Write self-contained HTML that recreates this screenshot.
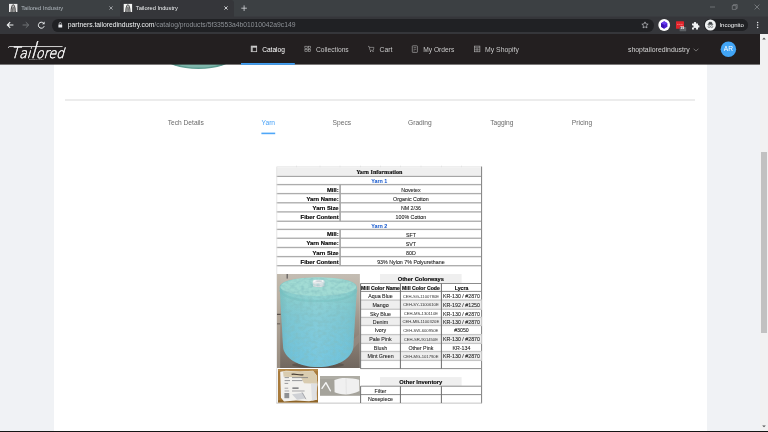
<!DOCTYPE html>
<html lang="en">
<head>
<meta charset="utf-8">
<title>Tailored Industry</title>
<style>
html,body{margin:0;padding:0;}
body{width:768px;height:432px;overflow:hidden;position:relative;background:#f0f2f5;font-family:"Liberation Sans",sans-serif;}
.a{position:absolute;}
.t{position:absolute;white-space:nowrap;line-height:1;}
/* ---------- browser chrome ---------- */
#tabbar{left:0;top:0;width:768px;height:17px;background:linear-gradient(#3c4043 0,#3c4043 16px,#393b3f 16px,#393b3f 17px);}
#tab2{left:119.5px;top:0;width:114.5px;height:17px;background:#35363a;border-radius:3px 3px 0 0;}
#toolbar{left:0;top:16.5px;width:768px;height:17.5px;background:#35363a;}
#omni{left:52px;top:19px;width:601.6px;height:13px;border-radius:6.4px;background:#202124;}
#incog{left:704px;top:19.4px;width:44px;height:11.2px;border-radius:5.6px;background:#202124;}
.tabt{font-size:5.72px;color:#dfe1e5;top:6.2px;}
.url{font-size:6.75px;top:22.1px;}
/* ---------- site header ---------- */
#hdr{left:0;top:34px;width:760px;height:30.4px;background:#231f20;}
.nav{font-size:6.5px;color:#c9c9c9;top:46.7px;}
/* ---------- page ---------- */
#content{left:54px;top:64.4px;width:652.5px;height:366.4px;background:#fff;}
#sbar{left:760px;top:34px;width:8px;height:397px;background:#f1f1f1;}
#thumb{left:761px;top:151.8px;width:6px;height:181.4px;background:#c1c1c1;}
.tab{font-size:6.65px;color:#6a6a6a;top:119.6px;}
/* ---------- sheet ---------- */
.hl{position:absolute;height:1px;background:#7d7d7d;}
.vl{position:absolute;width:1px;background:#5a5a5a;}
.lab{font-size:5.7px;font-weight:bold;color:#0a0a0a;-webkit-text-stroke:0.18px #0a0a0a;text-align:right;width:60px;left:278.6px;}
.val{font-size:5.3px;color:#1c1c1c;-webkit-text-stroke:0.08px #1c1c1c;text-align:center;width:141px;left:340.4px;}
.c1{font-size:5.3px;color:#1c1c1c;-webkit-text-stroke:0.08px #1c1c1c;text-align:center;width:40px;left:360.6px;}
.c2{font-size:4.2px;color:#333;text-align:center;width:41px;left:400.4px;}
.c3{font-size:5.3px;color:#1c1c1c;-webkit-text-stroke:0.08px #1c1c1c;text-align:center;width:40px;left:441.5px;}
.ser{font-family:"Liberation Serif",serif;font-weight:bold;color:#111;-webkit-text-stroke:0.15px #111;text-align:center;}
.yn{font-weight:bold;color:#1155cc;text-align:center;}
.hb{font-size:5.2px;font-weight:bold;color:#0a0a0a;-webkit-text-stroke:0.15px #0a0a0a;text-align:center;}
</style>
</head>
<body>
<div id="root" style="position:absolute;left:0;top:0;width:768px;height:432px;will-change:transform;">
<!-- browser chrome -->
<div class="a" id="tabbar"></div>
<div class="a" id="tab2"></div>
<div class="a" id="toolbar"></div>
<div class="a" id="omni"></div>
<div class="a" id="incog"></div>


<!-- tab strip content -->
<svg class="a" style="left:0;top:0" width="768" height="34" viewBox="0 0 768 34">
  <!-- favicons -->
  <g id="fav1">
    <rect x="9" y="3.9" width="8.4" height="8.1" fill="#ececec"/>
    <path d="M11 12 C11.1 8 12 4.7 13.2 4.7 C14.4 4.7 15.3 8 15.4 12 Z" fill="#b9b9b9"/>
    <path d="M11 12 C11.1 8 12 4.7 13.2 4.7 C14.4 4.7 15.3 8 15.4 12" stroke="#3c3c3c" stroke-width="0.95" fill="none"/>
    <path d="M12.4 12 C12.4 9.4 12.7 7.2 13.2 7.2 C13.7 7.2 14 9.4 14 12" stroke="#4c4c4c" stroke-width="0.7" fill="none"/>
  </g>
  <g transform="translate(114.7,0)">
    <rect x="9" y="3.9" width="8.4" height="8.1" fill="#f4f4f4"/>
    <path d="M11 12 C11.1 8 12 4.7 13.2 4.7 C14.4 4.7 15.3 8 15.4 12 Z" fill="#b9b9b9"/>
    <path d="M11 12 C11.1 8 12 4.7 13.2 4.7 C14.4 4.7 15.3 8 15.4 12" stroke="#3c3c3c" stroke-width="0.95" fill="none"/>
    <path d="M12.4 12 C12.4 9.4 12.7 7.2 13.2 7.2 C13.7 7.2 14 9.4 14 12" stroke="#4c4c4c" stroke-width="0.7" fill="none"/>
  </g>
  <!-- tab close buttons -->
  <path d="M109.4 6.4 l3.2 3.2 M112.6 6.4 l-3.2 3.2" stroke="#c4c7cb" stroke-width="0.7"/>
  <path d="M224.4 6.4 l3.2 3.2 M227.6 6.4 l-3.2 3.2" stroke="#eceef0" stroke-width="0.8"/>
  <!-- new tab -->
  <path d="M241.3 8.2 h5.6 M244.1 5.4 v5.6" stroke="#d5d8dc" stroke-width="0.8"/>
  <!-- window controls -->
  <path d="M710 7 h5" stroke="#8d9094" stroke-width="0.6"/>
  <path d="M732.3 5.6 h3.8 v3.8 h-3.8 z M733.4 5.6 v-1 h3.8 v3.8 h-1" stroke="#9ea1a5" stroke-width="0.5" fill="none"/>
  <path d="M754.6 4.6 l4.8 4.8 M759.4 4.6 l-4.8 4.8" stroke="#a4a7ab" stroke-width="0.55"/>
  <!-- back / forward / reload -->
  <path d="M13.4 25 h-6 M10.2 22.2 l-2.9 2.8 l2.9 2.8" stroke="#f1f3f4" stroke-width="1.05" fill="none"/>
  <path d="M22.6 25 h6 M25.8 22.2 l2.9 2.8 l-2.9 2.8" stroke="#777a7e" stroke-width="0.9" fill="none"/>
  <path d="M43.6 23.2 A3 3 0 1 0 44.2 26.2" stroke="#f1f3f4" stroke-width="1.0" fill="none"/>
  <path d="M44.6 21.6 v2.6 h-2.6 z" fill="#e3e5e8"/>
  <!-- lock -->
  <rect x="58.4" y="24.4" width="3.8" height="3.2" rx="0.4" fill="#e8eaed"/>
  <path d="M59.2 24.6 v-1.1 a1.1 1.1 0 0 1 2.2 0 v1.1" stroke="#e8eaed" stroke-width="0.6" fill="none"/>
  <!-- star -->
  <path d="M645 21.9 l0.95 2.05 l2.2 0.25 l-1.65 1.5 l0.45 2.2 l-1.95 -1.1 l-1.95 1.1 l0.45 -2.2 l-1.65 -1.5 l2.2 -0.25 z" stroke="#dadce0" stroke-width="0.6" fill="none" stroke-linejoin="round"/>
  <!-- extension 1: white circle + purple hexagon -->
  <circle cx="664.2" cy="25" r="5.9" fill="#ffffff"/>
  <path d="M664.2 21.3 l3.2 1.85 v3.7 l-3.2 1.85 l-3.2 -1.85 v-3.7 z" fill="#4a1ed0"/>
  <path d="M664.2 21.3 l3.2 1.85 l-3.2 1.85 l-3.2 -1.85 z" fill="#6a3cf0"/>
  <path d="M664.2 25 v3.7 l-3.2 -1.85 v-3.7 z" fill="#3a12b0"/>
  <!-- extension 2: red square + badge -->
  <rect x="676" y="21.2" width="8" height="7.6" rx="0.6" fill="#e0242b"/>
  <path d="M677.4 24.4 h1 M679.4 24.4 h1 M681.4 24.4 h1" stroke="#ffd6d6" stroke-width="0.7"/>
  <rect x="679.6" y="26.9" width="6.6" height="4.4" rx="0.5" fill="#5c6064"/>
  <!-- puzzle -->
  <path d="M692 23.4 h1.9 a1.15 1.15 0 1 1 2.2 0 h1.9 v1.9 a1.15 1.15 0 1 1 0 2.2 v1.9 h-2 a1.1 1.1 0 1 0 -2 0 h-2 v-2 a1.1 1.1 0 1 0 0 -2 z" fill="#f1f3f4"/>
  <!-- incognito avatar -->
  <circle cx="710.4" cy="25" r="5.5" fill="#f1f3f4"/>
  <path d="M707.6 24.4 h5.6 M708.6 24.2 l0.6 -1.9 h2.4 l0.6 1.9" stroke="#3c4043" stroke-width="0.7" fill="#3c4043"/>
  <circle cx="709.1" cy="26.6" r="1.05" stroke="#3c4043" stroke-width="0.5" fill="none"/>
  <circle cx="711.7" cy="26.6" r="1.05" stroke="#3c4043" stroke-width="0.5" fill="none"/>
  <!-- kebab menu -->
  <circle cx="757.6" cy="22.6" r="0.75" fill="#e8eaed"/>
  <circle cx="757.6" cy="25" r="0.75" fill="#e8eaed"/>
  <circle cx="757.6" cy="27.4" r="0.75" fill="#e8eaed"/>
</svg>
<div class="t tabt" style="left:21.2px;color:#b3bac1;">Tailored Industry</div>
<div class="t tabt" style="left:135.8px;color:#eef0f2;">Tailored Industry</div>
<div class="t url" style="left:67.8px;color:#f1f3f4;">partners.tailoredindustry.com<span style="color:#8e9297">/catalog/products/5f33553a4b01010042a9c149</span></div>
<div class="t" style="left:680.3px;top:27.4px;font-size:3.6px;font-weight:bold;color:#fff;">19</div>
<div class="t" style="left:719.4px;top:22.2px;font-size:6.04px;color:#f1f3f4;">Incognito</div>

<!-- page -->
<div class="a" id="content"></div>

<!-- product image remnant -->
<svg class="a" style="left:160px;top:64px" width="80" height="8" viewBox="160 64 80 8">
  <defs>
    <radialGradient id="tg" cx="198.5" cy="52" r="30" gradientUnits="userSpaceOnUse" gradientTransform="translate(0,41.6) scale(1,0.2)">
      <stop offset="0.6" stop-color="#86bdb2"/><stop offset="0.9" stop-color="#5a9a8e"/><stop offset="1" stop-color="#3f7f74"/>
    </radialGradient>
  </defs>
  <ellipse cx="198.5" cy="57" rx="34" ry="12" fill="#5d9c90"/>
  <ellipse cx="198.5" cy="56.4" rx="31" ry="11.2" fill="#7fb6ab"/>
</svg>
<div class="a" style="left:65px;top:99px;width:630px;height:2px;background:#ececec;"></div>
<!-- tabs -->
<div class="t tab" style="left:167.7px;">Tech Details</div>
<div class="t tab" style="left:261.5px;color:#4aa3f7;">Yarn</div>
<div class="t tab" style="left:332.6px;">Specs</div>
<div class="t tab" style="left:408px;">Grading</div>
<div class="t tab" style="left:490.2px;">Tagging</div>
<div class="t tab" style="left:571.8px;">Pricing</div>
<svg class="a" style="left:260px;top:131px" width="18" height="5" viewBox="260 131 18 5"><rect x="261.4" y="132.6" width="13.8" height="1.6" fill="#4fa7f8"/></svg>
<!-- SHEET START -->
<svg class="a" style="left:270px;top:160px" width="220" height="250" viewBox="270 160 220 250">
<rect x="276.50" y="167.20" width="205.50" height="9.00" fill="#efefef"/>
<rect x="276.50" y="166.30" width="205.50" height="0.60" fill="#e2e2e2"/>
<rect x="296.20" y="165.60" width="0.60" height="1.60" fill="#dcdcdc"/>
<rect x="319.70" y="165.60" width="0.60" height="1.60" fill="#dcdcdc"/>
<rect x="339.70" y="165.60" width="0.60" height="1.60" fill="#dcdcdc"/>
<rect x="360.20" y="165.60" width="0.60" height="1.60" fill="#dcdcdc"/>
<rect x="380.20" y="165.60" width="0.60" height="1.60" fill="#dcdcdc"/>
<rect x="400.20" y="165.60" width="0.60" height="1.60" fill="#dcdcdc"/>
<rect x="420.70" y="165.60" width="0.60" height="1.60" fill="#dcdcdc"/>
<rect x="441.20" y="165.60" width="0.60" height="1.60" fill="#dcdcdc"/>
<rect x="461.20" y="165.60" width="0.60" height="1.60" fill="#dcdcdc"/>
<rect x="276.50" y="175.85" width="205.50" height="1.10" fill="#a2a2a2"/>
<rect x="276.50" y="183.92" width="205.50" height="1.35" fill="#adadad"/>
<rect x="276.50" y="192.92" width="205.50" height="1.35" fill="#adadad"/>
<rect x="276.50" y="202.12" width="205.50" height="1.35" fill="#adadad"/>
<rect x="276.50" y="211.22" width="205.50" height="1.35" fill="#adadad"/>
<rect x="276.50" y="220.57" width="205.50" height="1.35" fill="#adadad"/>
<rect x="276.50" y="228.72" width="205.50" height="1.35" fill="#adadad"/>
<rect x="276.50" y="237.57" width="205.50" height="1.35" fill="#adadad"/>
<rect x="276.50" y="246.82" width="205.50" height="1.35" fill="#adadad"/>
<rect x="276.50" y="255.93" width="205.50" height="1.35" fill="#adadad"/>
<rect x="276.50" y="265.02" width="205.50" height="1.35" fill="#adadad"/>
<rect x="339.30" y="184.60" width="1.60" height="36.65" fill="#a6a6a6"/>
<rect x="339.30" y="229.40" width="1.60" height="36.30" fill="#a6a6a6"/>
<rect x="481.00" y="166.60" width="1.10" height="236.60" fill="#8a8a8a"/>
<rect x="276.35" y="167.00" width="0.90" height="201.60" fill="#e2e2e2"/>
<rect x="276.35" y="368.60" width="0.90" height="34.60" fill="#cfcfcf"/>
<rect x="276.50" y="402.70" width="205.50" height="0.80" fill="#b5b5b5"/>
<rect x="380.00" y="274.00" width="81.60" height="9.30" fill="#efefef"/>
<rect x="360.60" y="300.10" width="121.00" height="9.15" fill="#eeeeee"/>
<rect x="360.60" y="317.40" width="121.00" height="8.10" fill="#eeeeee"/>
<rect x="360.60" y="334.60" width="121.00" height="8.80" fill="#eeeeee"/>
<rect x="360.60" y="351.50" width="121.00" height="8.90" fill="#eeeeee"/>
<rect x="360.60" y="283.00" width="121.40" height="1.00" fill="#8c8c8c"/>
<rect x="360.60" y="290.90" width="121.40" height="1.00" fill="#8c8c8c"/>
<rect x="360.60" y="299.45" width="121.40" height="1.30" fill="#c6c6c6"/>
<rect x="360.60" y="308.60" width="121.40" height="1.30" fill="#c6c6c6"/>
<rect x="360.60" y="316.75" width="121.40" height="1.30" fill="#c6c6c6"/>
<rect x="360.60" y="324.85" width="121.40" height="1.30" fill="#c6c6c6"/>
<rect x="360.60" y="333.95" width="121.40" height="1.30" fill="#c6c6c6"/>
<rect x="360.60" y="342.75" width="121.40" height="1.30" fill="#c6c6c6"/>
<rect x="360.60" y="350.85" width="121.40" height="1.30" fill="#c6c6c6"/>
<rect x="360.60" y="359.75" width="121.40" height="1.30" fill="#c6c6c6"/>
<rect x="360.60" y="368.10" width="121.40" height="1.00" fill="#8c8c8c"/>
<rect x="360.10" y="283.50" width="1.00" height="85.10" fill="#6e6e6e"/>
<rect x="399.90" y="283.50" width="1.00" height="85.10" fill="#6e6e6e"/>
<rect x="440.90" y="283.50" width="1.00" height="85.10" fill="#6e6e6e"/>
<rect x="380.00" y="377.10" width="81.60" height="8.90" fill="#efefef"/>
<rect x="360.60" y="385.70" width="121.40" height="1.00" fill="#8c8c8c"/>
<rect x="360.60" y="394.10" width="121.40" height="1.00" fill="#8c8c8c"/>
<rect x="360.10" y="386.20" width="1.00" height="16.80" fill="#6e6e6e"/>
<rect x="399.90" y="386.20" width="1.00" height="16.80" fill="#6e6e6e"/>
<rect x="440.90" y="386.20" width="1.00" height="16.80" fill="#6e6e6e"/>
</svg>
<div class="t ser" style="left:276.50px;width:205.50px;top:168.65px;font-size:6.1px;">Yarn Information</div>
<div class="t yn" style="left:276.50px;width:205.50px;top:178.70px;font-size:5.4px;">Yarn 1</div>
<div class="t yn" style="left:276.50px;width:205.50px;top:223.53px;font-size:5.4px;">Yarn 2</div>
<div class="t lab" style="left:278.60px;width:60.00px;top:187.57px;font-size:5.85px;">Mill:</div>
<div class="t val" style="left:340.40px;width:141.00px;top:187.95px;font-size:5.3px;">Novetex</div>
<div class="t lab" style="left:278.60px;width:60.00px;top:232.30px;font-size:5.85px;">Mill:</div>
<div class="t val" style="left:340.40px;width:141.00px;top:232.67px;font-size:5.3px;">SFT</div>
<div class="t lab" style="left:278.60px;width:60.00px;top:196.67px;font-size:5.85px;">Yarn Name:</div>
<div class="t val" style="left:340.40px;width:141.00px;top:197.05px;font-size:5.3px;">Organic Cotton</div>
<div class="t lab" style="left:278.60px;width:60.00px;top:241.35px;font-size:5.85px;">Yarn Name:</div>
<div class="t val" style="left:340.40px;width:141.00px;top:241.72px;font-size:5.3px;">SVT</div>
<div class="t lab" style="left:278.60px;width:60.00px;top:205.83px;font-size:5.85px;">Yarn Size</div>
<div class="t val" style="left:340.40px;width:141.00px;top:206.20px;font-size:5.3px;">NM 2/36</div>
<div class="t lab" style="left:278.60px;width:60.00px;top:250.53px;font-size:5.85px;">Yarn Size</div>
<div class="t val" style="left:340.40px;width:141.00px;top:250.90px;font-size:5.3px;">80D</div>
<div class="t lab" style="left:278.60px;width:60.00px;top:215.05px;font-size:5.85px;">Fiber Content</div>
<div class="t val" style="left:340.40px;width:141.00px;top:215.42px;font-size:5.3px;">100% Cotton</div>
<div class="t lab" style="left:278.60px;width:60.00px;top:259.62px;font-size:5.85px;">Fiber Content</div>
<div class="t val" style="left:340.40px;width:141.00px;top:260.00px;font-size:5.3px;">93% Nylon 7% Polyurethane</div>
<div class="t hb" style="left:380.00px;width:81.60px;top:276.71px;font-size:5.77px;">Other Colorways</div>
<div class="t hb" style="left:360.60px;width:39.80px;top:285.77px;font-size:5.16px;">Mill Color Name</div>
<div class="t hb" style="left:400.40px;width:41.00px;top:285.77px;font-size:5.16px;">Mill Color Code</div>
<div class="t hb" style="left:441.40px;width:40.20px;top:285.77px;font-size:5.16px;">Lycra</div>
<div class="t c1" style="left:360.60px;width:39.80px;top:294.00px;font-size:5.3px;">Aqua Blue</div>
<div class="t c2" style="left:400.40px;width:41.00px;top:294.55px;font-size:4.2px;">CEH-SG-1100780E</div>
<div class="t c3" style="left:441.40px;width:40.20px;top:294.01px;font-size:5.27px;">KR-130 / #2870</div>
<div class="t c1" style="left:360.60px;width:39.80px;top:302.93px;font-size:5.3px;">Mango</div>
<div class="t c2" style="left:400.40px;width:41.00px;top:303.47px;font-size:4.2px;">CEH-SY-1100610E</div>
<div class="t c3" style="left:441.40px;width:40.20px;top:302.94px;font-size:5.27px;">KR-192 / #1250</div>
<div class="t c1" style="left:360.60px;width:39.80px;top:311.57px;font-size:5.3px;">Sky Blue</div>
<div class="t c2" style="left:400.40px;width:41.00px;top:312.12px;font-size:4.2px;">CEH-MS-130110E</div>
<div class="t c3" style="left:441.40px;width:40.20px;top:311.59px;font-size:5.27px;">KR-130 / #2870</div>
<div class="t c1" style="left:360.60px;width:39.80px;top:319.70px;font-size:5.3px;">Denim</div>
<div class="t c2" style="left:400.40px;width:41.00px;top:320.25px;font-size:4.2px;">CEH-MB-1100320E</div>
<div class="t c3" style="left:441.40px;width:40.20px;top:319.71px;font-size:5.27px;">KR-130 / #2870</div>
<div class="t c1" style="left:360.60px;width:39.80px;top:328.30px;font-size:5.3px;">Ivory</div>
<div class="t c2" style="left:400.40px;width:41.00px;top:328.85px;font-size:4.2px;">CEH-SW-600950E</div>
<div class="t c3" style="left:441.40px;width:40.20px;top:328.31px;font-size:5.27px;">#3050</div>
<div class="t c1" style="left:360.60px;width:39.80px;top:337.25px;font-size:5.3px;">Pale Pink</div>
<div class="t c2" style="left:400.40px;width:41.00px;top:337.80px;font-size:4.2px;">CEH-SR-901450E</div>
<div class="t c3" style="left:441.40px;width:40.20px;top:337.26px;font-size:5.27px;">KR-130 / #2870</div>
<div class="t c1" style="left:360.60px;width:39.80px;top:345.70px;font-size:5.3px;">Blush</div>
<div class="t c1" style="left:400.40px;width:41.00px;top:345.70px;font-size:5.3px;">Other Pink</div>
<div class="t c3" style="left:441.40px;width:40.20px;top:345.71px;font-size:5.27px;">KR-134</div>
<div class="t c1" style="left:360.60px;width:39.80px;top:354.20px;font-size:5.3px;">Mint Green</div>
<div class="t c2" style="left:400.40px;width:41.00px;top:354.75px;font-size:4.2px;">CEH-MG-101790E</div>
<div class="t c3" style="left:441.40px;width:40.20px;top:354.21px;font-size:5.27px;">KR-130 / #2870</div>
<div class="t hb" style="left:380.00px;width:81.60px;top:379.61px;font-size:5.79px;">Other Inventory</div>
<div class="t c1" style="left:360.60px;width:39.80px;top:388.65px;font-size:5.3px;">Filter</div>
<div class="t c1" style="left:360.60px;width:39.80px;top:396.95px;font-size:5.3px;">Nosepiece</div>
<!-- yarn cone photo -->
<svg class="a" style="left:277px;top:273.6px" width="82.9" height="94.4" viewBox="277 273.6 82.9 94.4" preserveAspectRatio="none">
  <defs>
    <linearGradient id="bgp" x1="0" y1="0" x2="0" y2="1">
      <stop offset="0" stop-color="#c4bdb3"/><stop offset="0.25" stop-color="#b5ada2"/><stop offset="0.5" stop-color="#9c9287"/><stop offset="0.75" stop-color="#877c72"/><stop offset="1" stop-color="#70665e"/>
    </linearGradient>
    <linearGradient id="cone" x1="0" y1="0" x2="0" y2="1">
      <stop offset="0" stop-color="#98d6cf"/><stop offset="0.22" stop-color="#8cd1d1"/><stop offset="0.45" stop-color="#80cad6"/><stop offset="0.75" stop-color="#77c7dc"/><stop offset="1" stop-color="#70c4df"/>
    </linearGradient>
    <linearGradient id="coneS" x1="0" y1="0" x2="1" y2="0">
      <stop offset="0" stop-color="#2f7f86" stop-opacity="0.22"/><stop offset="0.1" stop-color="#2f7f86" stop-opacity="0.06"/><stop offset="0.5" stop-color="#ffffff" stop-opacity="0.05"/><stop offset="0.88" stop-color="#2f7f86" stop-opacity="0.05"/><stop offset="1" stop-color="#2f7f86" stop-opacity="0.18"/>
    </linearGradient>
    <filter id="bl" x="-5%" y="-5%" width="110%" height="110%"><feGaussianBlur stdDeviation="0.5"/></filter>
    <filter id="nz" x="0" y="0" width="100%" height="100%">
      <feTurbulence type="fractalNoise" baseFrequency="0.22 0.3" numOctaves="2" seed="7" result="n"/>
      <feColorMatrix in="n" type="matrix" values="0 0 0 0 0.22  0 0 0 0 0.5  0 0 0 0 0.52  0 0 0 2.2 -0.85"/>
      <feGaussianBlur stdDeviation="0.6"/>
    </filter>
    <clipPath id="cc"><path d="M279.7 287 C279.7 280 297 277 318.3 277 C339.6 277 356.9 280 356.9 287 L353.4 345 C353.2 358 337 366.6 318.2 366.6 C299.4 366.6 283.2 358 283 345 Z"/></clipPath>
  </defs>
  <rect x="277" y="273.6" width="82.9" height="94.4" fill="url(#bgp)"/>
  <rect x="277" y="273.6" width="3.2" height="94.4" fill="#bfb4a3" opacity="0.5"/>
  <rect x="277" y="313.4" width="3.6" height="1.1" fill="#4e463f"/>
  <rect x="277" y="323" width="3.2" height="0.9" fill="#5e564f"/>
  <rect x="286.7" y="273.6" width="0.9" height="4.6" fill="#3c3a3c"/>
  <path d="M344 347 L359.9 333 L359.9 341 L349 353 Z" fill="#9a9086" opacity="0.55"/>
  <ellipse cx="318" cy="364.5" rx="26" ry="3.2" fill="#4f4741" opacity="0.55" filter="url(#bl)"/>
  <g filter="url(#bl)">
    <path d="M279.7 287 C279.7 280 297 277 318.3 277 C339.6 277 356.9 280 356.9 287 L353.4 345 C353.2 358 337 366.6 318.2 366.6 C299.4 366.6 283.2 358 283 345 Z" fill="url(#cone)"/>
    <path d="M279.7 287 C279.7 280 297 277 318.3 277 C339.6 277 356.9 280 356.9 287 L353.4 345 C353.2 358 337 366.6 318.2 366.6 C299.4 366.6 283.2 358 283 345 Z" fill="url(#coneS)"/>
    <ellipse cx="318.3" cy="286.4" rx="38" ry="9.2" fill="#a3dbd4" opacity="0.9"/>
    <path d="M280 289.6 C284 298.6 300 300.6 318.3 300.6 C336.6 300.6 352.6 298.6 356.6 289.6" stroke="#6fbdbd" stroke-width="2.4" fill="none" opacity="0.4"/>
    <ellipse cx="318.6" cy="285.4" rx="6.4" ry="1.5" fill="#78b3ae"/>
    <rect x="312.8" y="280.6" width="11.8" height="5" fill="#e6e8ea"/>
    <ellipse cx="318.7" cy="285.6" rx="5.9" ry="1.2" fill="#dcdfe2"/>
    <ellipse cx="318.7" cy="280.6" rx="5.9" ry="1.3" fill="#f5f6f7"/>
    <ellipse cx="318.7" cy="280.7" rx="3.6" ry="0.7" fill="#c3c7ce"/>
  </g>
  <rect x="277" y="273.6" width="82.9" height="94.4" filter="url(#nz)" clip-path="url(#cc)" opacity="0.6"/>
</svg>
<!-- label photo -->
<svg class="a" style="left:278px;top:369.2px" width="40" height="33.4" viewBox="278 369.2 40 33.4" preserveAspectRatio="none">
  <rect x="278" y="369.2" width="40" height="33.4" fill="#a87a3b"/>
  <rect x="278" y="369.2" width="40" height="2.2" fill="#b68a4a"/>
  <rect x="278" y="400.4" width="40" height="2.2" fill="#8d6428"/>
  <g filter="url(#bl)">
    <path d="M280.2 372 L286 371 L300 371.6 L313 371 L316.6 375.5 L317.4 385 L316.2 392 L317 400 L309 401.4 L296 400.6 L284 401.6 L281 398 Z" fill="#f2f1ee"/>
    <path d="M283 371.4 L300 371.8 L313 371.2 L316.6 375.6 L317.3 384 L304 383.4 L301 377.6 L283.6 377 Z" fill="#d9ccb0"/>
    <path d="M311 383.6 L317.3 384 L316.4 400 L312 400.8 Z" fill="#dfe0e2"/>
    <path d="M291.6 374.6 C295 373.6 299 375.8 303.4 374.8" stroke="#453b33" stroke-width="1.1" fill="none"/>
    <g stroke="#77797d" stroke-width="0.75">
      <path d="M284.6 377.8 h4.4 M292 377.8 h16 M284.6 380.8 h5.4 M292 380.8 h10.4 M284.6 383.6 h3.6"/>
      <path d="M284.6 388.4 h3.6 M284.6 391.2 h4.6 M292 391.2 h12.6" stroke="#8a8c90"/>
      <path d="M292.4 388.3 h6.2" stroke="#3f4146" stroke-width="1"/>
    </g>
    <rect x="284.4" y="393.2" width="4.8" height="5.2" fill="#8f9194"/>
    <path d="M292 394.4 L303 393 L305.6 398.6 L297 400 Z" fill="#cfd1d5"/>
    <path d="M302 392.6 L306 399.4" stroke="#9a9ca1" stroke-width="0.8"/>
  </g>
</svg>
<!-- mask photo -->
<svg class="a" style="left:320px;top:376px" width="40" height="19.8" viewBox="320 376 40 19.8" preserveAspectRatio="none">
  <rect x="320" y="376" width="40" height="19.8" fill="#a5a39b"/>
  <rect x="320" y="376" width="40" height="3" fill="#aeaca4"/>
  <g filter="url(#bl)">
    <path d="M334.4 380 C338 378.4 342 377.8 345.6 377.9 C350 378 355 378.6 359.2 379.8 L359.4 391 C355 393.4 350 394.4 345.6 394.4 C341 394.2 337 393.4 334.6 392.2 Z" fill="#f0f0f0"/>
    <path d="M346 378 L346.3 394.2" stroke="#dedede" stroke-width="0.7"/>
    <path d="M322 388.4 L325.9 382.6 L330.4 390.8" stroke="#f6f6f6" stroke-width="1.35" fill="none" stroke-linecap="round" stroke-linejoin="round"/>
  </g>
</svg>

<!-- SHEET END -->
<div class="a" id="hdr"></div>

<!-- site header content -->
<svg class="a" style="left:0;top:34px" width="760" height="31" viewBox="0 34 760 31">
  <!-- logo -->
  <path d="M8.4 47.4 C8.2 46.4 9.4 46.5 11 46.55 L62.2 46.55" stroke="#d2d2d2" stroke-width="1" fill="none" stroke-linecap="round"/>
  <text transform="translate(10.4,57.7) skewX(-16) scale(0.9,1)" font-family="DejaVu Sans, sans-serif" font-weight="200" font-size="14" fill="#ffffff" stroke="#ffffff" stroke-width="0.4"><tspan font-size="15.6">T</tspan>ai<tspan font-size="22">l</tspan>ored</text>
  <text x="29" y="59.9" font-family="Liberation Sans, sans-serif" font-size="1.7" fill="#bdbdbd" textLength="15" lengthAdjust="spacingAndGlyphs">BROOKLYN NY</text>
  <!-- catalog icon -->
  <rect x="251.2" y="46.1" width="5.5" height="5.6" stroke="#e4e4e4" stroke-width="0.7" fill="none"/>
  <rect x="251.2" y="46.1" width="5.5" height="1.5" fill="#d9d9d9"/>
  <rect x="251.2" y="46.1" width="1.5" height="5.6" fill="#bdbdbd"/>
  <!-- collections icon -->
  <g stroke="#b9b9b9" stroke-width="0.55" fill="none">
    <rect x="304.9" y="46.2" width="2.3" height="2.2"/><rect x="308.3" y="46.2" width="2.3" height="2.2"/>
    <rect x="304.9" y="49.5" width="2.3" height="2.2"/><rect x="308.3" y="49.5" width="2.3" height="2.2"/>
  </g>
  <!-- cart icon -->
  <path d="M368 46.4 h1.1 l0.9 3.9 h3.4 l0.5 -2.9 h-4.4" stroke="#b9b9b9" stroke-width="0.55" fill="none"/>
  <circle cx="370.5" cy="51.5" r="0.55" fill="#b9b9b9"/><circle cx="373" cy="51.5" r="0.55" fill="#b9b9b9"/>
  <!-- orders icon -->
  <rect x="412.3" y="45.8" width="5.1" height="6.6" rx="0.5" stroke="#b9b9b9" stroke-width="0.6" fill="none"/>
  <path d="M413.6 47.6 h2.6 M413.6 49.3 h2.6 M413.6 50.9 h1" stroke="#b9b9b9" stroke-width="0.5"/>
  <!-- shopify icon -->
  <rect x="474.3" y="46.1" width="5.6" height="5.7" stroke="#b9b9b9" stroke-width="0.6" fill="none"/>
  <path d="M474.3 47.8 h5.6 M474.3 49.8 h5.6 M477.1 47.8 v4" stroke="#b9b9b9" stroke-width="0.55"/>
  <!-- chevron -->
  <path d="M693.6 48.7 l2.4 2.4 l2.4 -2.4" stroke="#a9a9a9" stroke-width="0.6" fill="none"/>
  <!-- avatar -->
  <circle cx="728.4" cy="49.3" r="7.75" fill="#41a4f5"/>
</svg>
<div class="t nav" style="left:262.2px;font-size:6.6px;color:#ffffff;">Catalog</div>
<div class="t nav" style="left:316px;font-size:6.69px;">Collections</div>
<div class="t nav" style="left:379.6px;font-size:6.8px;">Cart</div>
<div class="t nav" style="left:423.2px;font-size:6.67px;">My Orders</div>
<div class="t nav" style="left:485.1px;font-size:6.85px;">My Shopify</div>
<div class="t nav" style="left:628px;font-size:6.9px;color:#d4d4d4;">shoptailoredindustry</div>
<div class="t" style="left:722.8px;top:46.3px;font-size:6.6px;color:#fff;width:11.2px;text-align:center;">AR</div>
<div class="a" id="sbar"></div>
<div class="a" id="thumb"></div>
<svg class="a" style="left:760px;top:34px" width="8" height="397" viewBox="760 34 8 397">
  <path d="M762.2 39.4 L764 37.6 L765.8 39.4 Z" fill="#505050"/>
  <path d="M762.2 425.5 L764 427.3 L765.8 425.5 Z" fill="#505050"/>
</svg>
<div class="a" style="left:0;top:64px;width:760px;height:1px;background:rgba(35,31,32,0.6);"></div>
<svg class="a" style="left:240px;top:62px" width="56" height="4" viewBox="240 62 56 4"><rect x="241" y="63" width="53.8" height="1.8" fill="#3f9ef3"/></svg>
<div class="a" style="left:0;top:430.6px;width:768px;height:1.4px;background:#151515;"></div>
</div>
</body>
</html>
